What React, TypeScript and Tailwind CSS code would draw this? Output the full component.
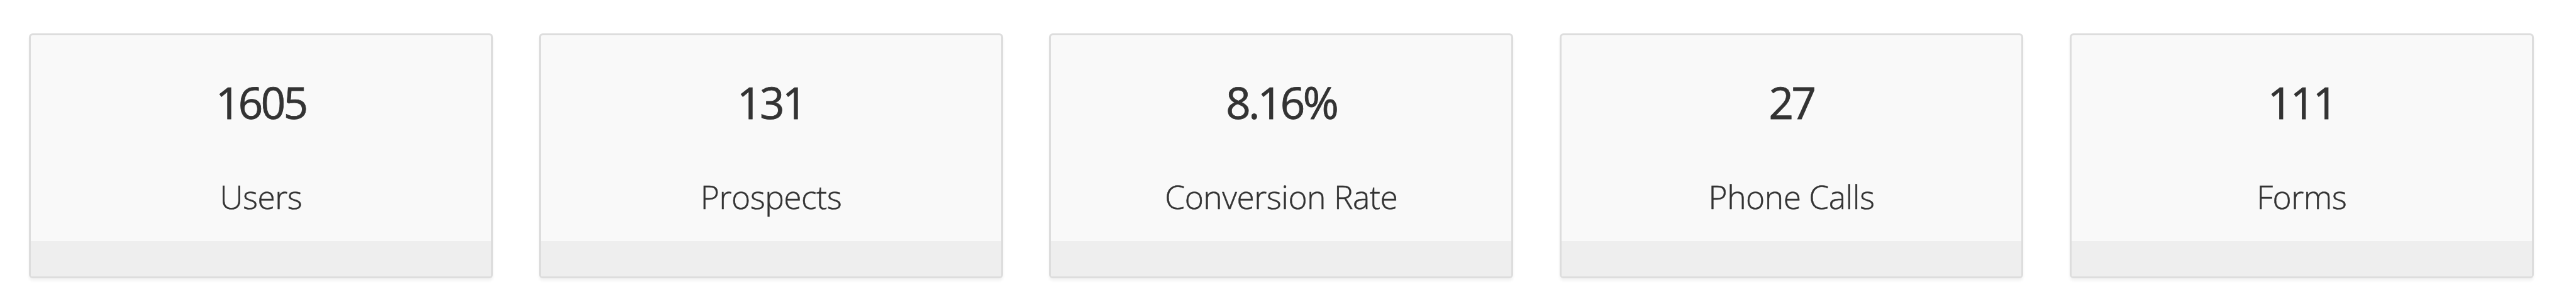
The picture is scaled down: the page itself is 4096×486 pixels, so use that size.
import React from "react";

interface StatCardProps {
  value: string;
  label: string;
}

const StatCard: React.FC<StatCardProps> = ({ value, label }) => (
  <div className="flex h-[389px] flex-1 flex-col overflow-hidden rounded-[6px] border-[3px] border-[#dddddd] bg-[#f9f9f9] text-center text-[#333333] shadow-[0_4px_4px_rgba(0,0,0,0.05)] [-webkit-text-stroke:0.5px_#333333]">
    <div className="flex-1 pt-[61px]">
      <p className="text-[69px] leading-[90px] tracking-[-3.5px] [-webkit-text-stroke:0.8px_#333333]">{value}</p>
      <p className="mt-[70px] text-[51.5px] leading-[70px] font-light tracking-[-0.5px]">{label}</p>
    </div>
    <div className="h-[56px] bg-[#eeeeee]"></div>
  </div>
);

const stats = [
  { value: "1605", label: "Users" },
  { value: "131", label: "Prospects" },
  { value: "8.16%", label: "Conversion Rate" },
  { value: "27", label: "Phone Calls" },
  { value: "111", label: "Forms" }
];

const App = () => {
  return (
    <section className="h-[486px] w-full bg-white pt-[53px] pr-[67.5px] pl-[46px] font-['Open_Sans',sans-serif]">
      <div className="flex gap-[73.6px]">
        {stats.map((stat) => (
          <StatCard key={stat.label} {...stat} />
        ))}
      </div>
    </section>
  );
};

export default App;
